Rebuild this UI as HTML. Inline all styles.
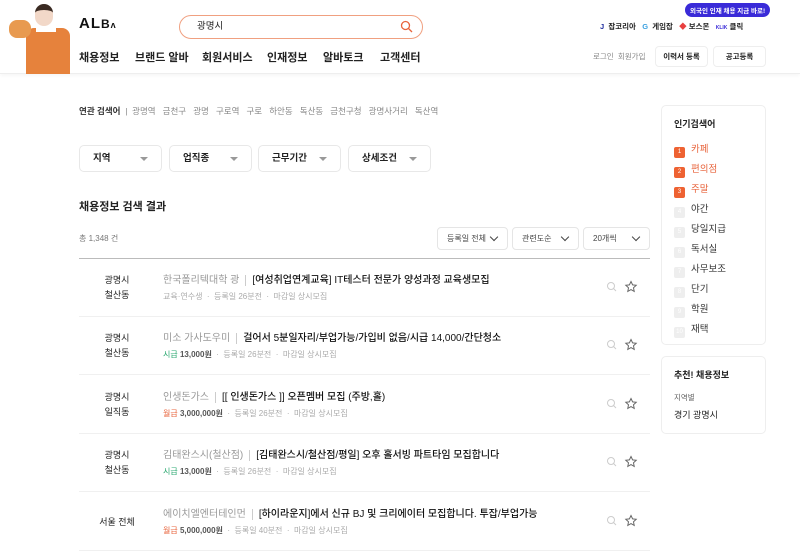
<!DOCTYPE html>
<html><head><meta charset="utf-8"><style>
*{margin:0;padding:0;box-sizing:border-box}
body{width:800px;height:549px;overflow:hidden;background:#fff;font-family:"Liberation Sans","Noto Sans CJK KR",sans-serif;color:#222;position:relative}
.a{position:absolute;white-space:nowrap}
.hdr{position:absolute;left:0;top:0;width:800px;height:74px;border-bottom:1px solid #eee;box-shadow:0 2px 3px rgba(0,0,0,.03)}
.nav{font-size:11px;font-weight:700;top:49px}
.sel{position:absolute;height:27px;border:1px solid #e8e8e8;border-radius:5px;font-size:9.5px;font-weight:700;padding:0 0 0 13px;line-height:25px}
.sel:after{content:"";position:absolute;right:13px;top:11px;border:4px solid transparent;border-top:4px solid #999}
.sm{position:absolute;top:227px;height:23px;border:1px solid #e5e5e5;border-radius:4px;font-size:8px;line-height:21px;padding-left:9px;color:#444}
.sm:after{content:"";position:absolute;right:10px;top:6px;width:5px;height:5px;border-right:1.2px solid #444;border-bottom:1.2px solid #444;transform:rotate(45deg)}
.row{position:absolute;left:79px;width:571px;height:58px;border-bottom:1px solid #f0f0f0}
.loc{position:absolute;left:14px;width:48px;text-align:center;font-size:9px;line-height:15px}
.co{position:absolute;left:84px;font-size:10px;color:#999}
.ti{font-size:10px;font-weight:500;color:#111;border-left:1px solid #ccc;padding-left:6px;margin-left:6px}
.meta{position:absolute;left:84px;top:32px;font-size:8px;color:#aaa}
.meta b{font-weight:600;color:#555}
.ic{position:absolute;right:12px;top:21px}
.rk{position:absolute;left:674px;font-size:9.5px;color:#333}
.rk i{display:inline-block;width:11px;height:11px;border-radius:2px;background:#eee;color:#fff;font-style:normal;font-size:6px;text-align:center;line-height:11px;margin-right:6px;vertical-align:-1px}
.rk.o{color:#e8643c}.rk.o i{background:#ee6232}
</style></head><body>
<div class="hdr"></div>
<div class="a" style="left:26px;top:28px;width:44px;height:46px;background:#e6823c;border-radius:8px 8px 0 0"></div>
<div class="a" style="left:36px;top:20px;width:20px;height:12px;background:#fff"></div>
<div class="a" style="left:35px;top:4px;width:18px;height:22px;background:#f2d8c8;border-radius:9px;border-top:6px solid #3a2a22"></div>
<div class="a" style="left:9px;top:20px;width:22px;height:18px;background:#e89a50;border-radius:8px"></div>
<div class="a" style="left:79px;top:15px;font-size:15px;font-weight:900;letter-spacing:1px;color:#111">AL<span style="font-size:12px">B</span><span style="font-size:9px">ʌ</span></div>
<div class="a" style="left:179px;top:15px;width:244px;height:24px;border:1.5px solid #f0a080;border-radius:12px;font-size:9.5px;line-height:21px;padding-left:17px">광명시</div>
<svg class="a" style="left:400px;top:20px" width="13" height="13" viewBox="0 0 13 13"><circle cx="5.5" cy="5.5" r="4" fill="none" stroke="#e8643c" stroke-width="1.3"/><path d="M8.5 8.5L12 12" stroke="#e8643c" stroke-width="1.3"/></svg>
<div class="a nav" style="left:79px">채용정보</div>
<div class="a nav" style="left:135px">브랜드 알바</div>
<div class="a nav" style="left:202px">회원서비스</div>
<div class="a nav" style="left:267px">인재정보</div>
<div class="a nav" style="left:323px">알바토크</div>
<div class="a nav" style="left:380px">고객센터</div>
<div class="a" style="left:685px;top:3px;background:#3a2bd8;color:#fff;font-size:6.5px;font-weight:700;padding:2px 5px;border-radius:7px">외국인 인재 채용 지금 바로!</div>
<div class="a" style="left:600px;top:21px;font-size:7.5px;font-weight:600"><span style="color:#2230a0;font-weight:900">J</span>&nbsp; 잡코리아 &nbsp;&nbsp;<span style="color:#3aa0e0;font-weight:900">G</span>&nbsp; 게임잡 &nbsp;&nbsp;<span style="color:#e84040">◆</span> 보스몬 &nbsp;&nbsp;<span style="color:#3a2bd8;font-size:5px">KLIK</span> 클릭</div>
<div class="a" style="left:593px;top:51px;font-size:7.5px;color:#888">로그인&nbsp; 회원가입</div>
<div class="a" style="left:655px;top:46px;width:53px;height:21px;border:1px solid #eee;border-radius:4px;font-size:7.5px;font-weight:600;text-align:center;line-height:19px">이력서 등록</div>
<div class="a" style="left:713px;top:46px;width:53px;height:21px;border:1px solid #eee;border-radius:4px;font-size:7.5px;font-weight:600;text-align:center;line-height:19px">공고등록</div>

<div class="a" style="left:79px;top:105px;font-size:8.5px;color:#888"><b style="color:#333;font-weight:600">연관 검색어</b> &nbsp;|&nbsp; 광명역&nbsp;&nbsp; 금천구&nbsp;&nbsp; 광명&nbsp;&nbsp; 구로역&nbsp;&nbsp; 구로&nbsp;&nbsp; 하안동&nbsp;&nbsp; 독산동&nbsp;&nbsp; 금천구청&nbsp;&nbsp; 광명사거리&nbsp;&nbsp; 독산역</div>
<div class="sel" style="left:79px;top:145px;width:83px">지역</div>
<div class="sel" style="left:169px;top:145px;width:83px">업직종</div>
<div class="sel" style="left:258px;top:145px;width:83px">근무기간</div>
<div class="sel" style="left:348px;top:145px;width:83px">상세조건</div>
<div class="a" style="left:79px;top:198px;font-size:11px;font-weight:700">채용정보 검색 결과</div>
<div class="a" style="left:79px;top:233px;font-size:8px;color:#777">총 1,348 건</div>
<div class="sm" style="left:437px;width:71px">등록일 전체</div>
<div class="sm" style="left:512px;width:67px">관련도순</div>
<div class="sm" style="left:583px;width:67px">20개씩</div>
<div class="a" style="left:79px;top:258px;width:571px;height:1px;background:#bbb"></div>

<div class="row" style="top:259px"><div class="loc" style="top:14px">광명시<br>철산동</div><div class="co" style="top:12px">한국폴리텍대학 광<span class="ti">[여성취업연계교육] IT테스터 전문가 양성과정 교육생모집</span></div><div class="meta">교육·연수생 &nbsp;·&nbsp; 등록일 26분전 &nbsp;·&nbsp; 마감일 상시모집</div><svg class="ic" width="32" height="14" viewBox="0 0 32 14"><circle cx="5" cy="6" r="3.5" fill="none" stroke="#ccc"/><path d="M7.5 8.5L10 11" stroke="#ccc"/><path d="M25 1.5l1.6 3.4 3.6.4-2.7 2.5.7 3.6-3.2-1.8-3.2 1.8.7-3.6-2.7-2.5 3.6-.4z" fill="none" stroke="#666"/></svg></div>
<div class="row" style="top:317px"><div class="loc" style="top:14px">광명시<br>철산동</div><div class="co" style="top:12px">미소 가사도우미<span class="ti">걸어서 5분일자리/부업가능/가입비 없음/시급 14,000/간단청소</span></div><div class="meta"><span style="color:#2aa870">시급</span> <b>13,000원</b> &nbsp;·&nbsp; 등록일 26분전 &nbsp;·&nbsp; 마감일 상시모집</div><svg class="ic" width="32" height="14" viewBox="0 0 32 14"><circle cx="5" cy="6" r="3.5" fill="none" stroke="#ccc"/><path d="M7.5 8.5L10 11" stroke="#ccc"/><path d="M25 1.5l1.6 3.4 3.6.4-2.7 2.5.7 3.6-3.2-1.8-3.2 1.8.7-3.6-2.7-2.5 3.6-.4z" fill="none" stroke="#666"/></svg></div>
<div class="row" style="top:376px"><div class="loc" style="top:14px">광명시<br>일직동</div><div class="co" style="top:12px">인생돈가스<span class="ti">[[ 인생돈가스 ]] 오픈멤버 모집 (주방,홀)</span></div><div class="meta"><span style="color:#e8643c">월급</span> <b>3,000,000원</b> &nbsp;·&nbsp; 등록일 26분전 &nbsp;·&nbsp; 마감일 상시모집</div><svg class="ic" width="32" height="14" viewBox="0 0 32 14"><circle cx="5" cy="6" r="3.5" fill="none" stroke="#ccc"/><path d="M7.5 8.5L10 11" stroke="#ccc"/><path d="M25 1.5l1.6 3.4 3.6.4-2.7 2.5.7 3.6-3.2-1.8-3.2 1.8.7-3.6-2.7-2.5 3.6-.4z" fill="none" stroke="#666"/></svg></div>
<div class="row" style="top:434px"><div class="loc" style="top:14px">광명시<br>철산동</div><div class="co" style="top:12px">김태완스시(철산점)<span class="ti">[김태완스시/철산점/평일] 오후 홀서빙 파트타임 모집합니다</span></div><div class="meta"><span style="color:#2aa870">시급</span> <b>13,000원</b> &nbsp;·&nbsp; 등록일 26분전 &nbsp;·&nbsp; 마감일 상시모집</div><svg class="ic" width="32" height="14" viewBox="0 0 32 14"><circle cx="5" cy="6" r="3.5" fill="none" stroke="#ccc"/><path d="M7.5 8.5L10 11" stroke="#ccc"/><path d="M25 1.5l1.6 3.4 3.6.4-2.7 2.5.7 3.6-3.2-1.8-3.2 1.8.7-3.6-2.7-2.5 3.6-.4z" fill="none" stroke="#666"/></svg></div>
<div class="row" style="top:493px"><div class="loc" style="top:22px">서울 전체</div><div class="co" style="top:12px">에이치엘엔터테인먼<span class="ti">[하이라운지]에서 신규 BJ 및 크리에이터 모집합니다. 투잡/부업가능</span></div><div class="meta"><span style="color:#e8643c">월급</span> <b>5,000,000원</b> &nbsp;·&nbsp; 등록일 40분전 &nbsp;·&nbsp; 마감일 상시모집</div><svg class="ic" width="32" height="14" viewBox="0 0 32 14"><circle cx="5" cy="6" r="3.5" fill="none" stroke="#ccc"/><path d="M7.5 8.5L10 11" stroke="#ccc"/><path d="M25 1.5l1.6 3.4 3.6.4-2.7 2.5.7 3.6-3.2-1.8-3.2 1.8.7-3.6-2.7-2.5 3.6-.4z" fill="none" stroke="#666"/></svg></div>

<div class="a" style="left:661px;top:105px;width:105px;height:240px;border:1px solid #eee;border-radius:5px"></div>
<div class="a" style="left:674px;top:117px;font-size:9px;font-weight:700">인기검색어</div>
<div class="rk a o" style="top:141px"><i>1</i>카페</div>
<div class="rk a o" style="top:161px"><i>2</i>편의점</div>
<div class="rk a o" style="top:181px"><i>3</i>주말</div>
<div class="rk a" style="top:201px"><i>4</i>야간</div>
<div class="rk a" style="top:221px"><i>5</i>당일지급</div>
<div class="rk a" style="top:241px"><i>6</i>독서실</div>
<div class="rk a" style="top:261px"><i>7</i>사무보조</div>
<div class="rk a" style="top:281px"><i>8</i>단기</div>
<div class="rk a" style="top:301px"><i>9</i>학원</div>
<div class="rk a" style="top:321px"><i>10</i>재택</div>
<div class="a" style="left:661px;top:356px;width:105px;height:78px;border:1px solid #eee;border-radius:5px"></div>
<div class="a" style="left:674px;top:368px;font-size:9px;font-weight:700">추천! 채용정보</div>
<div class="a" style="left:674px;top:392px;font-size:7.5px;color:#666">지역별</div>
<div class="a" style="left:674px;top:408px;font-size:9px">경기 광명시</div>
</body></html>
